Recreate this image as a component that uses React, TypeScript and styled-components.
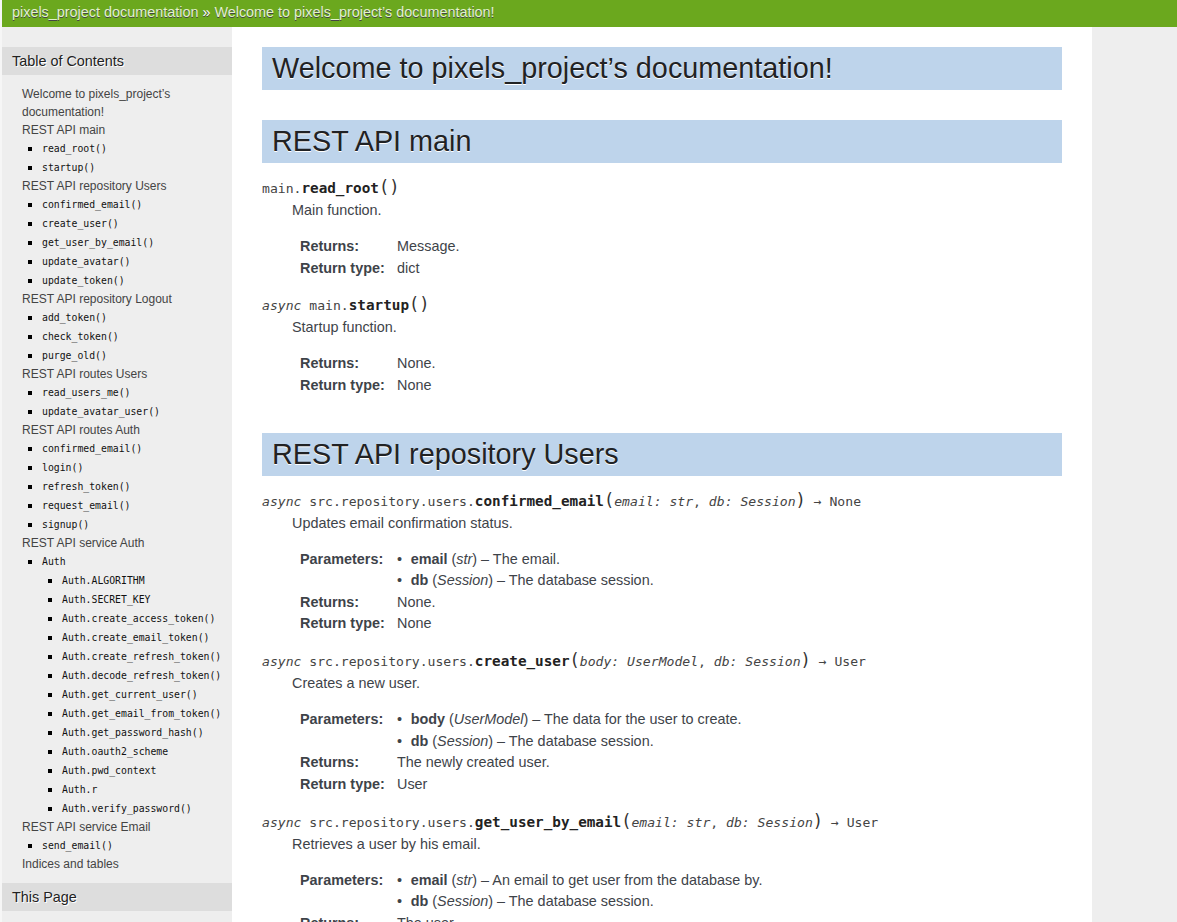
import React from "react";
import styled, { createGlobalStyle } from "styled-components";

const GlobalStyle = createGlobalStyle`
  html, body { margin: 0; padding: 0; overflow: hidden; background: #eee; }
  body { font-family: "Liberation Sans", Arial, sans-serif; }
  #root { height: 100vh; }
`;

const Page = styled.div`
  height: 100vh;
  display: flex;
  flex-direction: column;
  border-left: 2px solid #f6f6f6;
  overflow: hidden;
`;

const Related = styled.div`
  flex: none;
  height: 27px;
  background: #6ba81e;
  padding: 0 0 2px 10px;
  box-sizing: border-box;
  font-size: 14.4px;
  line-height: 25px;
  color: #fff;
  text-shadow: 0 1px 0 #444;
  white-space: nowrap;
`;

const Crumb = styled.a`
  color: #e2f3cc;
  text-decoration: none;
`;

const Document = styled.div`
  flex: 1;
  display: flex;
  background: #eee;
  min-height: 0;
`;

const Sidebar = styled.div`
  flex: none;
  width: 230px;
  padding: 20px 0;
  font-size: 12px;
  line-height: 18px;
`;

const SideHeading = styled.h3`
  margin: 0;
  padding: 5px 10px;
  background: #ddd;
  color: #222;
  font-size: 14.4px;
  font-weight: normal;
  line-height: 18px;
  text-shadow: 1px 1px 0 #fff;
`;

const TocList = styled.ul<{ $nested?: boolean }>`
  margin: ${(p) => (p.$nested ? "0 0 0 20px" : "10px 20px")};
  padding: 0;
  list-style: ${(p) => (p.$nested ? "square" : "none")};
  color: #000;
`;

const TocItem = styled.li<{ $code?: boolean }>`
  line-height: ${(p) => (p.$code ? "19px" : "18px")};
`;

const TocLink = styled.a`
  color: #444;
  text-decoration: none;
`;

const TocCode = styled.code`
  font-family: "DejaVu Sans Mono", monospace;
  font-size: 9.8px;
  line-height: 1;
  color: #111;
`;

const Body = styled.div`
  flex: none;
  width: 800px;
  padding: 0 30px 30px;
  background: #fff;
  color: #3e4349;
  font-size: 14.4px;
`;

const Section = styled.section``;

const Heading = styled.h1<{ $gap?: number }>`
  margin: 0 0 ${(p) => p.$gap ?? 15}px;
  border-top: 20px solid #fff;
  padding: 5px 0 5px 10px;
  background: #bed4eb;
  color: #212224;
  font-size: 28.8px;
  line-height: 33px;
  font-weight: normal;
  text-shadow: 0 1px 0 #fff;
`;

const Entry = styled.dl`
  margin: 0 0 16px;
`;

const Signature = styled.dt`
  height: 22px;
  font-family: "DejaVu Sans Mono", monospace;
  font-size: 13.1px;
  line-height: 22px;
  color: #444;
  white-space: nowrap;
`;

const SigPrefix = styled.em`
  font-style: italic;
  line-height: 1;
`;

const SigName = styled.span`
  font-size: 14.3px;
  font-weight: bold;
  color: #222;
  line-height: 1;
`;

const SigParen = styled.span`
  font-size: 17px;
  line-height: 1;
  color: #333;
`;

const SigParam = styled.em`
  font-style: italic;
  line-height: 1;
`;

const Description = styled.dd`
  margin: 0 0 0 30px;
`;

const DescText = styled.p`
  margin: 0;
  line-height: 21.6px;
`;

const FieldList = styled.dl`
  display: grid;
  grid-template-columns: 97px 1fr;
  margin: 14.5px 0 0 8px;
  line-height: 21.6px;
`;

const FieldName = styled.dt`
  font-weight: bold;
  color: #3e4349;
`;

const FieldBody = styled.dd`
  margin: 0;
`;

const ParamList = styled.ul`
  margin: 0;
  padding: 0;
  list-style: none;
`;

const ParamItem = styled.li`
  &::before {
    content: "•";
    display: inline-block;
    width: 13.7px;
  }
`;

type Param = { name: string; type: string; text: string };
type Api = {
  async?: boolean;
  cls: string;
  name: string;
  args?: string[];
  ret?: string;
  desc: string;
  params?: Param[];
  returns: string;
  rtype: string;
};

const Sig = ({ api }: { api: Api }) => (
  <Signature>
    {api.async && <SigPrefix>async </SigPrefix>}
    {api.cls}
    <SigName>{api.name}</SigName>
    <SigParen>(</SigParen>
    {(api.args ?? []).map((a, i) => (
      <React.Fragment key={a}>
        {i > 0 && ", "}
        <SigParam>{a}</SigParam>
      </React.Fragment>
    ))}
    <SigParen>)</SigParen>
    {api.ret && ` → ${api.ret}`}
  </Signature>
);

const ApiEntry = ({ api }: { api: Api }) => (
  <Entry>
    <Sig api={api} />
    <Description>
      <DescText>{api.desc}</DescText>
      <FieldList>
        {api.params && (
          <>
            <FieldName>Parameters:</FieldName>
            <FieldBody>
              <ParamList>
                {api.params.map((p) => (
                  <ParamItem key={p.name}>
                    <strong>{p.name}</strong> (<em>{p.type}</em>) – {p.text}
                  </ParamItem>
                ))}
              </ParamList>
            </FieldBody>
          </>
        )}
        <FieldName>Returns:</FieldName>
        <FieldBody>{api.returns}</FieldBody>
        <FieldName>Return type:</FieldName>
        <FieldBody>{api.rtype}</FieldBody>
      </FieldList>
    </Description>
  </Entry>
);

const mainApis: Api[] = [
  { cls: "main.", name: "read_root", desc: "Main function.", returns: "Message.", rtype: "dict" },
  { async: true, cls: "main.", name: "startup", desc: "Startup function.", returns: "None.", rtype: "None" },
];

const dbSession: Param = { name: "db", type: "Session", text: "The database session." };

const userApis: Api[] = [
  {
    async: true,
    cls: "src.repository.users.",
    name: "confirmed_email",
    args: ["email: str", "db: Session"],
    ret: "None",
    desc: "Updates email confirmation status.",
    params: [{ name: "email", type: "str", text: "The email." }, dbSession],
    returns: "None.",
    rtype: "None",
  },
  {
    async: true,
    cls: "src.repository.users.",
    name: "create_user",
    args: ["body: UserModel", "db: Session"],
    ret: "User",
    desc: "Creates a new user.",
    params: [{ name: "body", type: "UserModel", text: "The data for the user to create." }, dbSession],
    returns: "The newly created user.",
    rtype: "User",
  },
  {
    async: true,
    cls: "src.repository.users.",
    name: "get_user_by_email",
    args: ["email: str", "db: Session"],
    ret: "User",
    desc: "Retrieves a user by his email.",
    params: [{ name: "email", type: "str", text: "An email to get user from the database by." }, dbSession],
    returns: "The user.",
    rtype: "User",
  },
];

type Toc = { title: string; items?: (string | { title: string; items: string[] })[] };

const toc: Toc[] = [
  { title: "Welcome to pixels_project’s documentation!" },
  { title: "REST API main", items: ["read_root()", "startup()"] },
  {
    title: "REST API repository Users",
    items: ["confirmed_email()", "create_user()", "get_user_by_email()", "update_avatar()", "update_token()"],
  },
  { title: "REST API repository Logout", items: ["add_token()", "check_token()", "purge_old()"] },
  { title: "REST API routes Users", items: ["read_users_me()", "update_avatar_user()"] },
  {
    title: "REST API routes Auth",
    items: ["confirmed_email()", "login()", "refresh_token()", "request_email()", "signup()"],
  },
  {
    title: "REST API service Auth",
    items: [
      {
        title: "Auth",
        items: [
          "Auth.ALGORITHM",
          "Auth.SECRET_KEY",
          "Auth.create_access_token()",
          "Auth.create_email_token()",
          "Auth.create_refresh_token()",
          "Auth.decode_refresh_token()",
          "Auth.get_current_user()",
          "Auth.get_email_from_token()",
          "Auth.get_password_hash()",
          "Auth.oauth2_scheme",
          "Auth.pwd_context",
          "Auth.r",
          "Auth.verify_password()",
        ],
      },
    ],
  },
  { title: "REST API service Email", items: ["send_email()"] },
  { title: "Indices and tables" },
];

const CodeItem = ({ text }: { text: string }) => (
  <TocItem $code>
    <TocLink>
      <TocCode>{text}</TocCode>
    </TocLink>
  </TocItem>
);

export default function App() {
  return (
    <>
      <GlobalStyle />
      <Page>
        <Related>
          <Crumb>pixels_project documentation</Crumb> » <Crumb>Welcome to pixels_project’s documentation!</Crumb>
        </Related>
        <Document>
          <Sidebar>
            <SideHeading>Table of Contents</SideHeading>
            <TocList>
              {toc.map((t) => (
                <TocItem key={t.title}>
                  <TocLink>{t.title}</TocLink>
                  {t.items && (
                    <TocList $nested>
                      {t.items.map((it) =>
                        typeof it === "string" ? (
                          <CodeItem key={it} text={it} />
                        ) : (
                          <TocItem key={it.title} $code>
                            <TocLink>
                              <TocCode>{it.title}</TocCode>
                            </TocLink>
                            <TocList $nested>
                              {it.items.map((s) => (
                                <CodeItem key={s} text={s} />
                              ))}
                            </TocList>
                          </TocItem>
                        )
                      )}
                    </TocList>
                  )}
                </TocItem>
              ))}
            </TocList>
            <SideHeading>This Page</SideHeading>
            <TocList>
              <TocItem>
                <TocLink>Show Source</TocLink>
              </TocItem>
            </TocList>
          </Sidebar>
          <Body>
            <Section>
              <Heading $gap={10}>Welcome to pixels_project’s documentation!</Heading>
            </Section>
            <Section>
              <Heading>REST API main</Heading>
              {mainApis.map((a) => (
                <ApiEntry key={a.name} api={a} />
              ))}
            </Section>
            <Section>
              <Heading>REST API repository Users</Heading>
              {userApis.map((a) => (
                <ApiEntry key={a.name} api={a} />
              ))}
            </Section>
          </Body>
        </Document>
      </Page>
    </>
  );
}
